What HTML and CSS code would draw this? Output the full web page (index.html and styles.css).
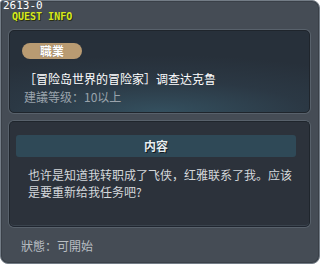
FILE: index.html
```html
<!DOCTYPE html>
<html lang="zh">
<head>
    <meta charset="UTF-8">
    <meta name="viewport" content="width=device-width, initial-scale=1.0">
    <title>Quest Info</title>
    <link rel="stylesheet" href="styles.css">
</head>
<body>
    <div class="window">
        <div class="titlebar">
            <div class="quest-id">2613-0</div>
            <div class="title">QUEST INFO</div>
        </div>
        <div class="panel summary">
            <span class="badge">職業</span>
            <p class="quest-name">［冒险岛世界的冒险家］调查达克鲁</p>
            <p class="quest-level">建議等级：10以上</p>
        </div>
        <div class="panel content">
            <div class="content-head">内容</div>
            <p class="content-text">也许是知道我转职成了飞侠，红雅联系了我。应该是要重新给我任务吧?</p>
        </div>
        <div class="status">狀態：可開始</div>
    </div>
</body>
</html>
```
FILE: styles.css
```css
html, body {
    margin: 0;
    padding: 0;
    background: #fff;
}
.window {
    width: 318px;
    height: 262px;
    border: 1px solid #737c86;
    border-radius: 3px 8px 8px 8px;
    background: #454c55;
    box-shadow: inset 0 0 0 1px #3a4048;
    font-family: "Noto Sans CJK SC", "DejaVu Sans", sans-serif;
    font-size: 12px;
    color: #fff;
    display: flex;
    flex-direction: column;
}
.titlebar {
    height: 29px;
    font-family: "DejaVu Sans Mono", monospace;
}
.quest-id {
    font-size: 11px;
    line-height: 10px;
    padding-left: 2px;
    color: #fff;
}
.title {
    font-size: 10px;
    font-weight: bold;
    line-height: 11px;
    padding-left: 11px;
    color: #d6ea1e;
    text-shadow: 1px 1px 0 #2a2f14;
}
.panel {
    margin-left: 8px;
    width: 301px;
    border: 1px solid #1f252c;
    border-radius: 5px;
    box-shadow: 0 0 0 1px #58616b;
    box-sizing: border-box;
}
.summary {
    height: 83px;
    padding: 11px 12px 0;
    background: radial-gradient(ellipse 90% 70% at 50% 100%, #34505f 0%, #2b3844 55%, #27303a 100%);
}
.badge {
    display: inline-block;
    width: 60px;
    height: 16px;
    border-radius: 8px;
    background: #b99b72;
    text-align: center;
    font-weight: bold;
    line-height: 16px;
    text-shadow: 0 0 1px #6b5435;
}
.quest-name {
    margin: 11px 0 0 2px;
    line-height: 17px;
}
.quest-level {
    margin: 1px 0 0 2px;
    line-height: 17px;
    color: #9aa3ac;
}
.content {
    margin-top: 8px;
    height: 106px;
    padding: 13px 13px 0 6px;
    background: #2c323b;
    border-bottom-color: #202630;
    box-shadow: 0 0 0 1px #58616b, inset 0 -1px 0 #3a434d;
}
.content-head {
    height: 22px;
    border-radius: 3px;
    background: #2f4957;
    text-align: center;
    font-weight: bold;
    line-height: 22px;
    color: #e6ecef;
    text-shadow: 1px 1px 0 #10181e;
}
.content-text {
    margin: 9px 0 0 12px;
    line-height: 17px;
    color: #d4d8dc;
}
.status {
    margin: 12px 0 0 20px;
    color: #b9bec3;
    line-height: 14px;
}
```
